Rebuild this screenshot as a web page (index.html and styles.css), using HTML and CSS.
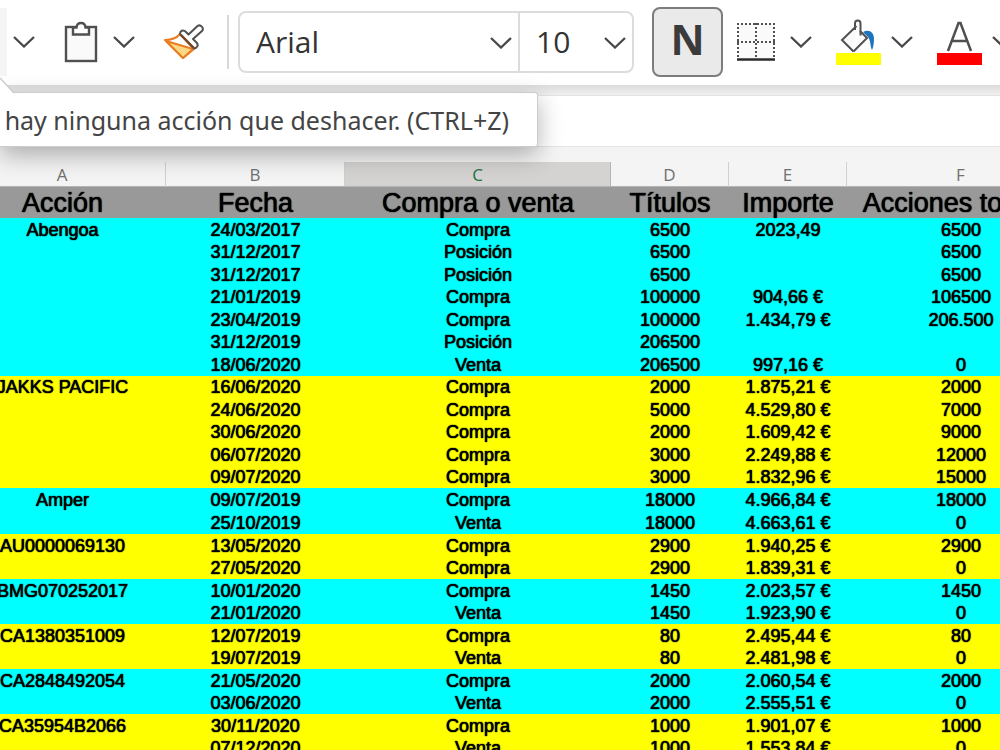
FILE: index.html
```html
<!DOCTYPE html>
<html lang="es">
<head>
    <meta charset="UTF-8">
    <meta name="viewport" content="width=device-width, initial-scale=1.0">
    <title>Acciones</title>
    <link rel="stylesheet" href="styles.css">
</head>
<body>

<svg class="defs" width="0" height="0">
    <symbol id="chevron" viewBox="0 0 22 12">
        <path d="M1 1 L11 10.5 L21 1" fill="none" stroke="#484848" stroke-width="2.3"/>
    </symbol>
</svg>

<div class="toolbar">
    <div class="group">
        <button class="undo" aria-label="Deshacer"></button>
        <button class="arrow" aria-label="Opciones de deshacer"><svg width="22" height="12"><use href="#chevron"/></svg></button>
    </div>
    <div class="group paste">
        <button class="tool" aria-label="Pegar">
            <svg width="34" height="42" viewBox="0 0 34 42">
                <rect x="2" y="6" width="30" height="34" fill="#fafafa" stroke="#505050" stroke-width="2.4"/>
                <path d="M9 13.5 V6.5 H12.5 C13 0.5 21 0.5 21.5 6.5 H25 V13.5 Z" fill="#fff" stroke="#505050" stroke-width="2.4"/>
            </svg>
        </button>
        <button class="arrow" aria-label="Opciones de pegado"><svg width="22" height="12"><use href="#chevron"/></svg></button>
    </div>
    <button class="tool brush" aria-label="Copiar formato">
        <svg width="42" height="36" viewBox="0 0 42 36">
            <path d="M2 16 C9 16 14 13.5 17 10 L31 25 L20 34 Z" fill="#fff" stroke="#ea7d24" stroke-width="2" stroke-linejoin="round"/>
            <path d="M3 17 L30 25 L20 34 Z" fill="#fbd886" stroke="#ea7d24" stroke-width="2" stroke-linejoin="round"/>
            <path d="M17 10 C17 7 20 5 23 8 L25.500 10.500 L34.500 2 C37.500 0 41.500 4 39 7 L30 15 L33.500 18.500 C36 21 34 24.500 31 24.500 Z" fill="#fff" stroke="#505050" stroke-width="2" stroke-linejoin="round"/>
            <path d="M18 11 L31 24" stroke="#7a4420" stroke-width="2"/>
        </svg>
    </button>
    <span class="divider"></span>
    <div class="combo">
        <label class="font-name">
            <select aria-label="Fuente"><option>Arial</option></select>
            <svg width="22" height="12"><use href="#chevron"/></svg>
        </label>
        <label class="font-size">
            <select aria-label="Tamaño de fuente"><option>10</option></select>
            <svg width="22" height="12"><use href="#chevron"/></svg>
        </label>
    </div>
    <button class="bold" aria-label="Negrita">N</button>
    <div class="group borders">
        <button class="tool" aria-label="Bordes">
            <svg width="38" height="38" viewBox="0 0 38 38">
                <rect x="1" y="1" width="36" height="34" fill="#fafafa"/>
                <path d="M0 1 H38 M0 19 H38 M1 0 V34 M19 0 V34 M37 0 V34" fill="none" stroke="#505050" stroke-width="2" stroke-dasharray="2 2"/>
                <path d="M0 36.500 H38" stroke="#2a2a2a" stroke-width="2.500"/>
            </svg>
        </button>
        <button class="arrow" aria-label="Tipos de borde"><svg width="22" height="12"><use href="#chevron"/></svg></button>
    </div>
    <div class="group colors">
        <button class="tool" aria-label="Color de relleno">
            <svg width="46" height="46" viewBox="0 0 46 46">
                <path d="M18.500 32.500 L7 21 L21.500 7 M18.500 32.500 L32 19 L25 12" fill="#fafafa" stroke="#505050" stroke-width="2"/>
                <path d="M20 11 V4.500 C20 0.500 25.500 0.500 25.500 4.500 V16.500" fill="none" stroke="#505050" stroke-width="2"/>
                <path d="M28 13 C34 10 39 13 39 20 C39 25 38 29 37 31 C35 27 36 22 33 18 Z" fill="#1f74c0"/>
                <rect x="1" y="34" width="45" height="12" fill="#ff0"/>
            </svg>
        </button>
        <button class="arrow" aria-label="Colores de relleno"><svg width="22" height="12"><use href="#chevron"/></svg></button>
    </div>
    <div class="group colors">
        <button class="tool" aria-label="Color de fuente">
            <svg width="46" height="46" viewBox="0 0 46 46">
                <path d="M12 32 L22.500 4 H24.500 L35 32 M16 22 H31" fill="none" stroke="#505050" stroke-width="2.500"/>
                <rect x="1" y="34" width="45" height="12" fill="red"/>
            </svg>
        </button>
        <button class="arrow" aria-label="Colores de fuente"><svg width="22" height="12"><use href="#chevron"/></svg></button>
    </div>
</div>

<div class="formula-bar">
    <div class="tooltip" role="tooltip">
        <svg class="beak" width="14" height="17" viewBox="0 0 14 17">
            <path d="M0 1 L14 16 V17 H0 Z" fill="#fff"/>
            <path d="M0 1 L14 16" stroke="#ccc" stroke-width="1.500"/>
        </svg>
        <span>hay ninguna acción que deshacer. (CTRL+Z)</span>
    </div>
    <input class="formula" type="text" aria-label="Barra de fórmulas">
</div>

<div class="grid">
    <table>
        <colgroup>
            <col class="col-a"><col class="col-b"><col class="col-c"><col class="col-d"><col class="col-e"><col class="col-f">
        </colgroup>
        <thead>
            <tr class="letters"><th>A</th><th>B</th><th class="selected">C</th><th>D</th><th>E</th><th>F</th></tr>
            <tr class="titles"><th>Acción</th><th>Fecha</th><th>Compra o venta</th><th>Títulos</th><th>Importe</th><th>Acciones totales</th></tr>
        </thead>
        <tbody>
            <tr class="cyan"><td>Abengoa</td><td>24/03/2017</td><td>Compra</td><td>6500</td><td>2023,49</td><td>6500</td></tr>
            <tr class="cyan"><td></td><td>31/12/2017</td><td>Posición</td><td>6500</td><td></td><td>6500</td></tr>
            <tr class="cyan"><td></td><td>31/12/2017</td><td>Posición</td><td>6500</td><td></td><td>6500</td></tr>
            <tr class="cyan"><td></td><td>21/01/2019</td><td>Compra</td><td>100000</td><td>904,66 €</td><td>106500</td></tr>
            <tr class="cyan"><td></td><td>23/04/2019</td><td>Compra</td><td>100000</td><td>1.434,79 €</td><td>206.500</td></tr>
            <tr class="cyan"><td></td><td>31/12/2019</td><td>Posición</td><td>206500</td><td></td><td></td></tr>
            <tr class="cyan"><td></td><td>18/06/2020</td><td>Venta</td><td>206500</td><td>997,16 €</td><td>0</td></tr>
            <tr class="yellow"><td>JAKKS PACIFIC</td><td>16/06/2020</td><td>Compra</td><td>2000</td><td>1.875,21 €</td><td>2000</td></tr>
            <tr class="yellow"><td></td><td>24/06/2020</td><td>Compra</td><td>5000</td><td>4.529,80 €</td><td>7000</td></tr>
            <tr class="yellow"><td></td><td>30/06/2020</td><td>Compra</td><td>2000</td><td>1.609,42 €</td><td>9000</td></tr>
            <tr class="yellow"><td></td><td>06/07/2020</td><td>Compra</td><td>3000</td><td>2.249,88 €</td><td>12000</td></tr>
            <tr class="yellow"><td></td><td>09/07/2020</td><td>Compra</td><td>3000</td><td>1.832,96 €</td><td>15000</td></tr>
            <tr class="cyan"><td>Amper</td><td>09/07/2019</td><td>Compra</td><td>18000</td><td>4.966,84 €</td><td>18000</td></tr>
            <tr class="cyan"><td></td><td>25/10/2019</td><td>Venta</td><td>18000</td><td>4.663,61 €</td><td>0</td></tr>
            <tr class="yellow"><td>AU0000069130</td><td>13/05/2020</td><td>Compra</td><td>2900</td><td>1.940,25 €</td><td>2900</td></tr>
            <tr class="yellow"><td></td><td>27/05/2020</td><td>Compra</td><td>2900</td><td>1.839,31 €</td><td>0</td></tr>
            <tr class="cyan"><td>BMG070252017</td><td>10/01/2020</td><td>Compra</td><td>1450</td><td>2.023,57 €</td><td>1450</td></tr>
            <tr class="cyan"><td></td><td>21/01/2020</td><td>Venta</td><td>1450</td><td>1.923,90 €</td><td>0</td></tr>
            <tr class="yellow"><td>CA1380351009</td><td>12/07/2019</td><td>Compra</td><td>80</td><td>2.495,44 €</td><td>80</td></tr>
            <tr class="yellow"><td></td><td>19/07/2019</td><td>Venta</td><td>80</td><td>2.481,98 €</td><td>0</td></tr>
            <tr class="cyan"><td>CA2848492054</td><td>21/05/2020</td><td>Compra</td><td>2000</td><td>2.060,54 €</td><td>2000</td></tr>
            <tr class="cyan"><td></td><td>03/06/2020</td><td>Venta</td><td>2000</td><td>2.555,51 €</td><td>0</td></tr>
            <tr class="yellow"><td>CA35954B2066</td><td>30/11/2020</td><td>Compra</td><td>1000</td><td>1.901,07 €</td><td>1000</td></tr>
            <tr class="yellow"><td></td><td>07/12/2020</td><td>Venta</td><td>1000</td><td>1.553,84 €</td><td>0</td></tr>
        </tbody>
    </table>
</div>

</body>
</html>
```
FILE: styles.css
```css
* {
    box-sizing: border-box;
}
body {
    margin: 0;
    height: 100vh;
    overflow: hidden;
    display: flex;
    flex-direction: column;
    background: #f4f4f4;
    font-family: "Open Sans", "Noto Sans", sans-serif;
}
.defs {
    position: absolute;
}
button {
    padding: 0;
    border: none;
    background: none;
    cursor: pointer;
}

/* toolbar */
.toolbar {
    flex: none;
    display: flex;
    align-items: center;
    height: 85px;
    padding-bottom: 2px;
    overflow: hidden;
    background: #fff;
}
.toolbar > *, .toolbar button {
    flex: none;
}
.group {
    display: flex;
    align-items: center;
}
.undo {
    width: 7px;
    height: 68px;
    background: #f5f5f5;
}
.arrow, .tool {
    display: flex;
    align-items: center;
    justify-content: center;
    height: 68px;
}
.arrow {
    width: 34px;
}
.tool {
    width: 48px;
}
.paste {
    gap: 2px;
    margin-left: 16px;
}
.brush {
    margin-left: 19px;
}
.divider {
    width: 2px;
    height: 54px;
    margin: 0 9px 0 19px;
    background: #d8d8d8;
}
.combo {
    display: flex;
    width: 396px;
    height: 62px;
    border: 2px solid #dcdcdc;
    border-radius: 8px;
}
.combo label {
    position: relative;
    display: flex;
}
.font-name {
    flex: 1;
    border-right: 2px solid #dcdcdc;
}
.font-size {
    width: 112px;
}
.combo select {
    appearance: none;
    width: 100%;
    padding: 0 16px;
    border: none;
    background: none;
    color: #333;
    font: 30px "Open Sans", sans-serif;
}
.combo svg {
    position: absolute;
    right: 6px;
    top: 24px;
    pointer-events: none;
}
.bold {
    width: 71px;
    height: 70px;
    margin-left: 18px;
    padding-bottom: 7px;
    border: 2px solid #7c7c7c;
    border-radius: 8px;
    background: #eaeaea;
    color: #3b3b3b;
    font: bold 42px "Open Sans", sans-serif;
}
.borders {
    gap: 4px;
    margin-left: 9px;
}
.colors {
    gap: 3px;
    margin-left: 16px;
}

/* formula bar */
.formula-bar {
    flex: none;
    position: relative;
    padding-top: 10px;
    background: linear-gradient(#dcdcdc, #f0f0f0 10px);
}
.formula {
    display: block;
    width: 100%;
    height: 52px;
    padding: 0 16px;
    border: solid #e4e4e4;
    border-width: 1px 0;
    background: #fff;
    font-size: 24px;
}
.tooltip {
    position: absolute;
    left: 0;
    top: 7px;
    display: flex;
    align-items: center;
    justify-content: flex-end;
    width: 538px;
    height: 55px;
    padding-right: 28px;
    border: 1px solid #ccc;
    border-left: none;
    border-radius: 0 3px 3px 0;
    background: #fff;
    box-shadow: 0 8px 24px rgba(0, 0, 0, 0.3);
    color: #444;
    font: 25px "Noto Sans", sans-serif;
    white-space: nowrap;
}
.beak {
    position: absolute;
    left: 0;
    top: -16px;
}

/* sheet */
.grid {
    flex: 1;
    min-height: 0;
    overflow: hidden;
    padding-top: 15px;
}
table {
    width: 1116px;
    margin-left: -41px;
    table-layout: fixed;
    border-collapse: separate;
    border-spacing: 0;
    font-family: "Liberation Sans", Arial, sans-serif;
    color: #000;
}
.col-a { width: 207px; }
.col-b { width: 179px; }
.col-c { width: 266px; }
.col-d, .col-e { width: 118px; }
.col-f { width: 228px; }
th, td {
    padding: 0;
    text-align: center;
    white-space: nowrap;
}
.letters th {
    height: 25px;
    padding-top: 1px;
    border-right: 1px solid #d0d0d0;
    border-bottom: 1px solid #b4b4b4;
    color: #707070;
    font: 17px/23px "Open Sans", sans-serif;
}
.letters .selected {
    background: #d4d3d1;
    border-right-color: #b4b4b4;
    color: #217346;
}
.titles th {
    height: 31px;
    padding-top: 2px;
    background: #999;
    font-size: 27px;
    font-weight: normal;
    line-height: 29px;
    text-shadow: 0 0 1px #000, 0 0 1px #000;
}
td {
    height: 22px;
    font-size: 18px;
    line-height: 22px;
    text-shadow: 0 0 1px #000, 0 0 1px #000;
}
tbody tr:nth-child(odd) td,
tbody tr:nth-child(14) td {
    height: 23px;
}
.cyan {
    background: #0ff;
}
.yellow {
    background: #ff0;
}
```
